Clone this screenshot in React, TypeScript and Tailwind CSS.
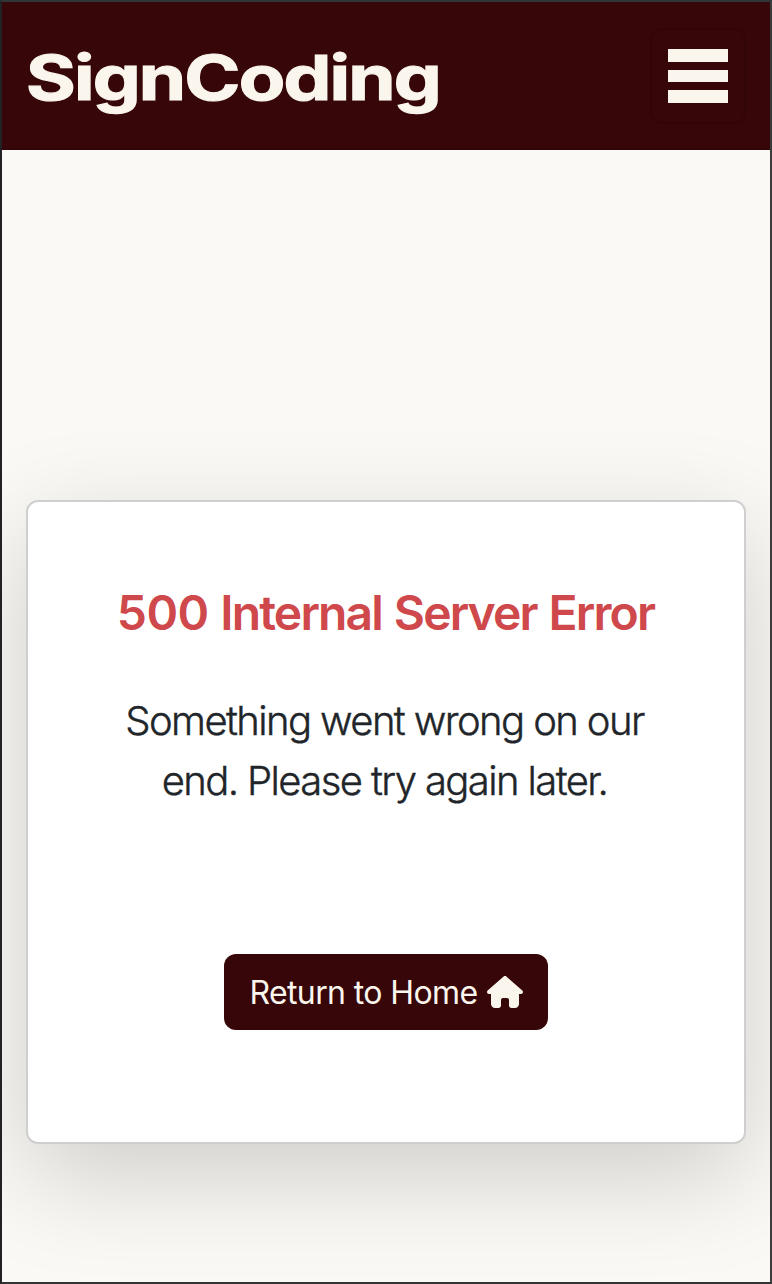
import React from 'react';

export default function App() {
  return (
    <div className="flex h-[1284px] w-[772px] flex-col overflow-hidden border-2 border-t-[#303637] border-r-[#3a3c3e] border-b-[#333333] border-l-[#222225] bg-[#faf9f5] font-['Inter','Liberation_Sans',sans-serif]">
      <header className="flex h-[148px] shrink-0 items-center justify-between border-b-2 border-[#320508] bg-[#370609] pr-6 pl-6">
        <svg className="h-[100px] w-[420px] overflow-visible" viewBox="0 0 420 100">
          <text x="0" y="75" textLength="414" lengthAdjust="spacingAndGlyphs" className="fill-[#faf6ed] stroke-[#faf6ed] stroke-[1.2px] text-[62px] font-bold tracking-[-1.5px]">SignCoding</text>
        </svg>
        <button aria-label="Menu" className="mt-0.5 flex h-24 w-24 flex-col items-center gap-2 rounded-xl border-2 border-[#320508] pt-[19px]">
          <span className="h-[13px] w-[60px] bg-[#faf6ed]" />
          <span className="h-3 w-[60px] bg-[#faf6ed]" />
          <span className="h-[13px] w-[60px] bg-[#faf6ed]" />
        </button>
      </header>
      <main className="flex grow flex-col px-6 pt-[350px]">
        <section className="flex h-[644px] flex-col items-center rounded-xl border-2 border-[#cecfce] bg-white text-center shadow-[0_32px_104px_rgba(0,0,0,0.175)]">
          <h1 className="mt-[82px] mr-px text-[48px] leading-[58px] font-semibold tracking-[-1.85px] whitespace-nowrap text-[#cf484b] [word-spacing:1.500px]"><span className="tracking-[-0.6px]">500</span> Internal Server Error</h1>
          <p className="mt-[49px] mr-[3px] text-[40px] leading-[60px] font-light tracking-[-1.6px] whitespace-nowrap text-[#212529] [-webkit-text-stroke:0.4px_#212529]">Something went wrong on our<br />end. Please try again later.</p>
          <button className="mt-[143px] flex h-[76px] w-[324px] items-center justify-center gap-[9px] rounded-xl bg-[#370609] text-[32px] tracking-[-0.6px] whitespace-nowrap text-[#faf6ed]">
            <span className="pt-0.5">Return to Home</span>
            <svg className="h-8 w-9" viewBox="0 0 576 512" fill="currentColor" aria-hidden="true">
              <path d="M575.8 255.500c0 18-15 32.100-32 32.100h-32l.7 160.200c0 35.300-28.700 64.200-64 64.200H392c-22.100 0-40-17.900-40-40v-88c0-17.700-14.300-32-32-32h-64c-17.700 0-32 14.300-32 32v88c0 22.100-17.900 40-40 40h-56c-35.300 0-64-28.700-64-64V287.600H32c-18 0-32-14-32-32.100 0-9 3-17 10-24L266.400 8c7-7 15-8 22-8s15 2 21 7l255.400 224.500c8 7 12 15 11 24z" />
            </svg>
          </button>
        </section>
      </main>
    </div>
  );
}
